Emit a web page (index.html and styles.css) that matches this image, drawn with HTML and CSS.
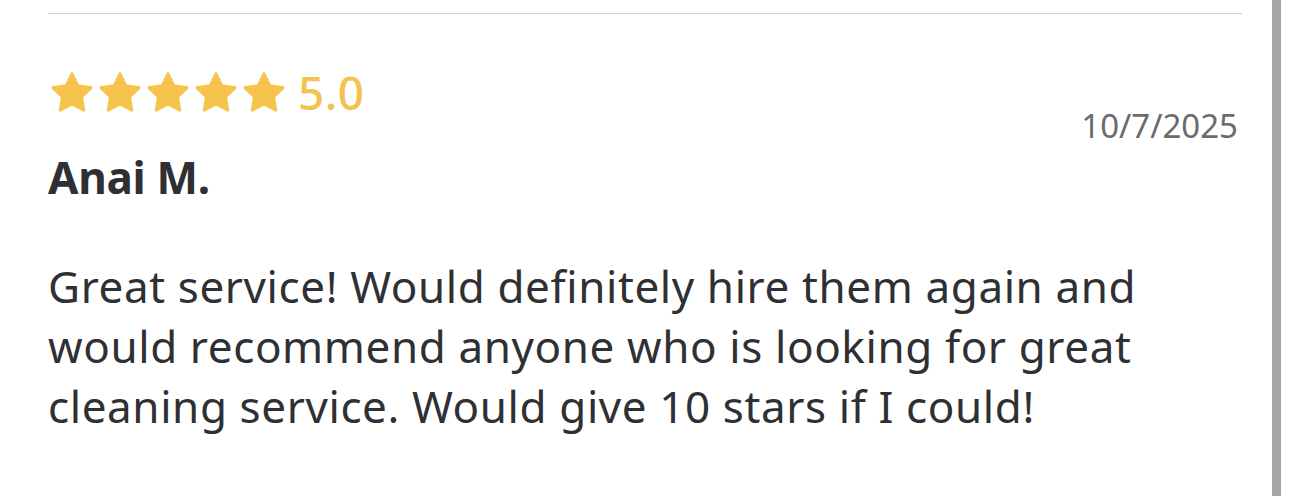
FILE: index.html
```html
<!DOCTYPE html>
<html lang="en">
<head>
<meta charset="utf-8">
<link rel="stylesheet" href="styles.css">
</head>
<body>
<div class="page">
  <article class="review">
    <header class="review-head">
      <div class="head-left">
        <div class="rating">
          <div class="stars">
            <svg class="star" viewBox="1 1 22 21" aria-hidden="true"><path d="M12 2l3.09 6.26L22 9.27l-5 4.87 1.18 6.88L12 17.77l-6.18 3.25L7 14.14 2 9.27l6.91-1.01L12 2z"/></svg>
            <svg class="star" viewBox="1 1 22 21" aria-hidden="true"><path d="M12 2l3.09 6.26L22 9.27l-5 4.87 1.18 6.88L12 17.77l-6.18 3.25L7 14.14 2 9.27l6.91-1.01L12 2z"/></svg>
            <svg class="star" viewBox="1 1 22 21" aria-hidden="true"><path d="M12 2l3.09 6.26L22 9.27l-5 4.87 1.18 6.88L12 17.77l-6.18 3.25L7 14.14 2 9.27l6.91-1.01L12 2z"/></svg>
            <svg class="star" viewBox="1 1 22 21" aria-hidden="true"><path d="M12 2l3.09 6.26L22 9.27l-5 4.87 1.18 6.88L12 17.77l-6.18 3.25L7 14.14 2 9.27l6.91-1.01L12 2z"/></svg>
            <svg class="star" viewBox="1 1 22 21" aria-hidden="true"><path d="M12 2l3.09 6.26L22 9.27l-5 4.87 1.18 6.88L12 17.77l-6.18 3.25L7 14.14 2 9.27l6.91-1.01L12 2z"/></svg>
          </div>
          <span class="score">5.0</span>
        </div>
        <h2 class="name">Anai M.</h2>
      </div>
      <time class="date">10/7/2025</time>
    </header>
    <p class="body">Great service! Would definitely hire them again and would recommend anyone who is looking for great cleaning service. Would give 10 stars if I could!</p>
  </article>
  <div class="scrollbar"></div>
</div>
</body>
</html>
```

FILE: styles.css
```css
html, body {
  margin: 0;
  padding: 0;
  background: #ffffff;
}
body {
  width: 1290px;
  height: 496px;
  overflow: hidden;
  font-family: "Noto Sans", "Liberation Sans", sans-serif;
  color: #2f3033;
}
.page {
  display: flex;
  height: 496px;
}
.review {
  width: 1194px;
  margin-left: 48px;
  margin-top: 13px;
  border-top: 1px solid #d0d0d0;
}
.review-head {
  display: flex;
  justify-content: space-between;
  align-items: flex-start;
  padding-right: 4px;
}
.rating {
  display: flex;
  align-items: center;
  margin-top: 58px;
  height: 40px;
}
.stars {
  display: flex;
  gap: 6px;
  padding-left: 3px;
}
.star {
  width: 42px;
  height: 40px;
  fill: #f6c34f;
  stroke: #f6c34f;
  stroke-width: 1.6;
  stroke-linejoin: round;
}
.score {
  margin-left: 13px;
  font-size: 46px;
  font-weight: 500;
  color: #f3c24f;
  line-height: 40px;
  letter-spacing: 0.5px;
}
.name {
  margin: 40px 0 0 0;
  font-size: 44px;
  font-weight: 700;
  line-height: 50px;
  letter-spacing: -0.3px;
}
.date {
  margin-top: 92px;
  font-size: 33px;
  color: #6b6b6b;
  line-height: 40px;
}
.body {
  margin: 54px 0 0 0;
  font-size: 44px;
  line-height: 60px;
  letter-spacing: 0.6px;
  color: #2f3033;
}
.scrollbar {
  width: 9px;
  height: 496px;
  margin-left: 30px;
  background: #a6a6a6;
}
```
